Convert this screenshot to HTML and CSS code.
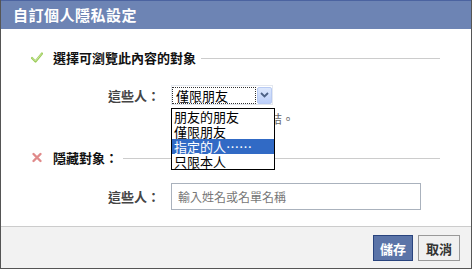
FILE: index.html
```html
<!DOCTYPE html>
<html lang="zh-Hant">
<head>
    <meta charset="UTF-8">
    <title>自訂個人隱私設定</title>
    <link rel="stylesheet" href="styles.css">
</head>
<body>
    <div class="dialog">
        <div class="title">自訂個人隱私設定</div>

        <div class="content">
            <!-- who can see it -->
            <div class="section-head">
                <svg class="icon" width="12" height="11" viewBox="0 0 12 11">
                    <path d="M1 6 L4.5 9.5 L11 1.5" fill="none" stroke="#9ccc5a" stroke-width="2.2" stroke-linecap="round" stroke-linejoin="round"/>
                    <path d="M1.5 6 L4.5 9 L10.5 1.8" fill="none" stroke="#d6ecb0" stroke-width="0.8" stroke-linecap="round"/>
                </svg>
                <span class="head-text">選擇可瀏覽此內容的對象</span>
                <span class="rule"></span>
            </div>

            <div class="row">
                <label class="row-label">這些人：</label>
                <div class="select">
                    <div class="select-value">僅限朋友</div>
                    <div class="select-arrow">
                        <svg width="9" height="6" viewBox="0 0 9 6">
                            <path d="M1 1 L4.5 4.5 L8 1" fill="none" stroke="#4d6185" stroke-width="1.8"/>
                        </svg>
                    </div>
                    <ul class="options">
                        <li>朋友的朋友</li>
                        <li>僅限朋友</li>
                        <li class="active">指定的人……</li>
                        <li>只限本人</li>
                    </ul>
                </div>
            </div>
            <div class="hint">結。</div>

            <!-- hidden from -->
            <div class="section-head second">
                <svg class="icon" width="11" height="11" viewBox="0 0 11 11">
                    <path d="M2 2 L9 9 M9 2 L2 9" fill="none" stroke="#e08a8a" stroke-width="2.4" stroke-linecap="round"/>
                </svg>
                <span class="head-text">隱藏對象：</span>
                <span class="rule"></span>
            </div>

            <div class="row second-row">
                <label class="row-label">這些人：</label>
                <input class="name-input" type="text" placeholder="輸入姓名或名單名稱">
            </div>
        </div>

        <div class="footer">
            <button class="btn btn-save">儲存</button>
            <button class="btn btn-cancel">取消</button>
        </div>
    </div>
</body>
</html>
```

FILE: styles.css
```css
body {
    margin: 0;
    background: #fff;
    font-family: 'Noto Sans CJK TC', 'Noto Sans', sans-serif;
}
.dialog {
    width: 470px;
    border: 1px solid #555;
    border-top: none;
}
.title {
    height: 28px;
    border-top: 1px solid #4b63a0;
    background-color: #6d84b4;
    color: white;
    font-size: 15px;
    font-weight: bold;
    letter-spacing: 0.5px;
    line-height: 28px;
    padding-left: 12px;
}
.content {
    height: 197px;
    box-sizing: border-box;
    padding: 18px 31px 16px 30px;
}
.section-head {
    display: flex;
    align-items: center;
    height: 20px;
}
.section-head.second {
    margin-top: 20px;
}
.icon {
    width: 12px;
    margin-right: 10px;
}
.head-text {
    font-size: 13px;
    font-weight: bold;
    color: #111;
}
.rule {
    flex: 1;
    height: 1px;
    margin-left: 5px;
    margin-top: 3px;
    background-color: #ccc;
}
.row {
    display: flex;
    align-items: center;
    margin-top: 18px;
    padding-left: 69px;
}
.row.second-row {
    margin-top: 16px;
}
.row-label {
    width: 60px;
    margin-right: 11px;
    text-align: right;
    font-size: 13px;
    font-weight: bold;
    color: #444;
}
.select {
    position: relative;
    display: flex;
    align-items: center;
    width: 102px;
    height: 20px;
    box-sizing: border-box;
    border: 1px solid #e4e8ef;
}
.select-value {
    flex: 1;
    height: 15px;
    margin-right: 1px;
    border: 1px dotted #333;
    font-size: 13px;
    line-height: 15px;
    padding-left: 3px;
}
.select-arrow {
    display: flex;
    align-items: center;
    justify-content: center;
    width: 15px;
    height: 17px;
    box-sizing: border-box;
    border: 1px solid #b9cbf3;
    border-radius: 2px;
    background: linear-gradient(#dde8fd, #bccffa);
}
.options {
    position: absolute;
    top: 22px;
    left: -1px;
    width: 102px;
    margin: 0;
    padding: 0;
    list-style: none;
    border: 1px solid #000;
    background: white;
    z-index: 10;
}
.options li {
    height: 15px;
    padding-left: 2px;
    font-size: 13px;
    line-height: 15px;
    color: #000;
}
.options li.active {
    background-color: #316ac5;
    color: white;
}
.hint {
    margin: 6px 0 0 239px;
    font-size: 12px;
    line-height: 16px;
    color: #666;
}
.name-input {
    width: 250px;
    height: 27px;
    box-sizing: border-box;
    border: 1px solid #aab2bd;
    padding: 0 6px;
    font-family: inherit;
    font-size: 12px;
}
.name-input::placeholder {
    color: #777;
}
.footer {
    display: flex;
    justify-content: flex-end;
    gap: 5px;
    height: 42px;
    box-sizing: border-box;
    padding: 8px 11px 0 0;
    border-top: 1px solid #ccc;
    background-color: #f2f2f2;
}
.btn {
    height: 26px;
    padding: 0 6px;
    font-family: inherit;
    font-size: 13px;
    font-weight: bold;
    cursor: pointer;
}
.btn-save {
    background-color: #5b74a8;
    border: 1px solid #29447e;
    color: white;
}
.btn-cancel {
    background-color: #f0f0f0;
    border: 1px solid #999;
    color: #333;
    padding: 0 7px;
}
```
